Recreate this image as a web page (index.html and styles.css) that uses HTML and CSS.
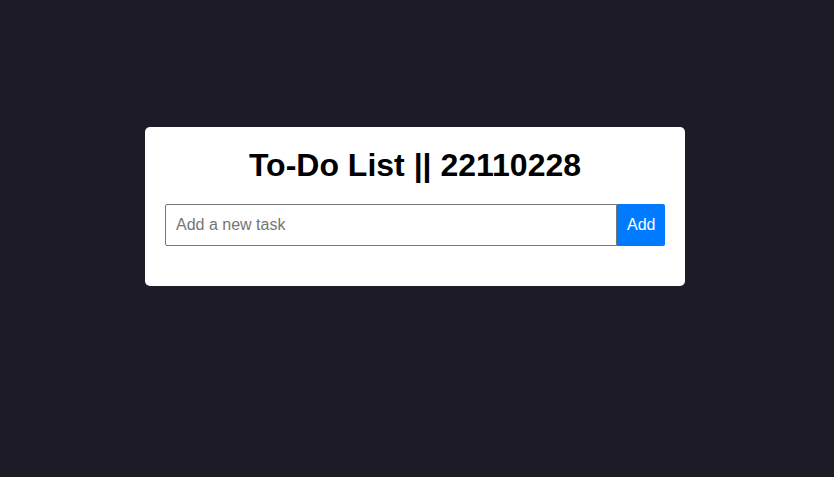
FILE: index.html
```html
<!DOCTYPE html>
<html lang="en">
<head>
<meta charset="utf-8">
<title>To-Do List</title>
<link rel="stylesheet" href="styles.css">
</head>
<body>
<div class="card">
  <h1 class="title">To-Do List || 22110228</h1>
  <div class="row">
    <input class="task-input" type="text" placeholder="Add a new task">
    <button class="add-btn">Add</button>
  </div>
  <ul class="list"></ul>
</div>
</body>
</html>
```
FILE: styles.css
```css
html, body {
  margin: 0;
  height: 100%;
}
body {
  background: #1c1b26;
  font-family: "Liberation Sans", Arial, sans-serif;
  padding-top: 127px;
  box-sizing: border-box;
}
.card {
  margin-left: 145px;
  width: 540px;
  box-sizing: border-box;
  background: #ffffff;
  border-radius: 5px;
  padding: 20px;
}
.title {
  margin: 0 0 20px 0;
  text-align: center;
  font-size: 32px;
  font-weight: bold;
  color: #000;
  line-height: 37px;
}
.row {
  display: flex;
}
.task-input {
  flex: 1;
  height: 42px;
  box-sizing: border-box;
  padding: 10px;
  font-size: 16px;
  font-family: "Liberation Sans", Arial, sans-serif;
  border: 1px solid #767676;
  border-radius: 2px 0 0 2px;
  outline: none;
  color: #000;
}
.task-input::placeholder {
  color: #757575;
}
.add-btn {
  width: 48px;
  height: 42px;
  padding: 10px;
  border: none;
  background: #007bff;
  color: #fff;
  font-size: 16px;
  font-family: "Liberation Sans", Arial, sans-serif;
  border-radius: 0 2px 2px 0;
}
.list {
  margin: 0;
  padding: 0;
  height: 20px;
  list-style: none;
}
```
